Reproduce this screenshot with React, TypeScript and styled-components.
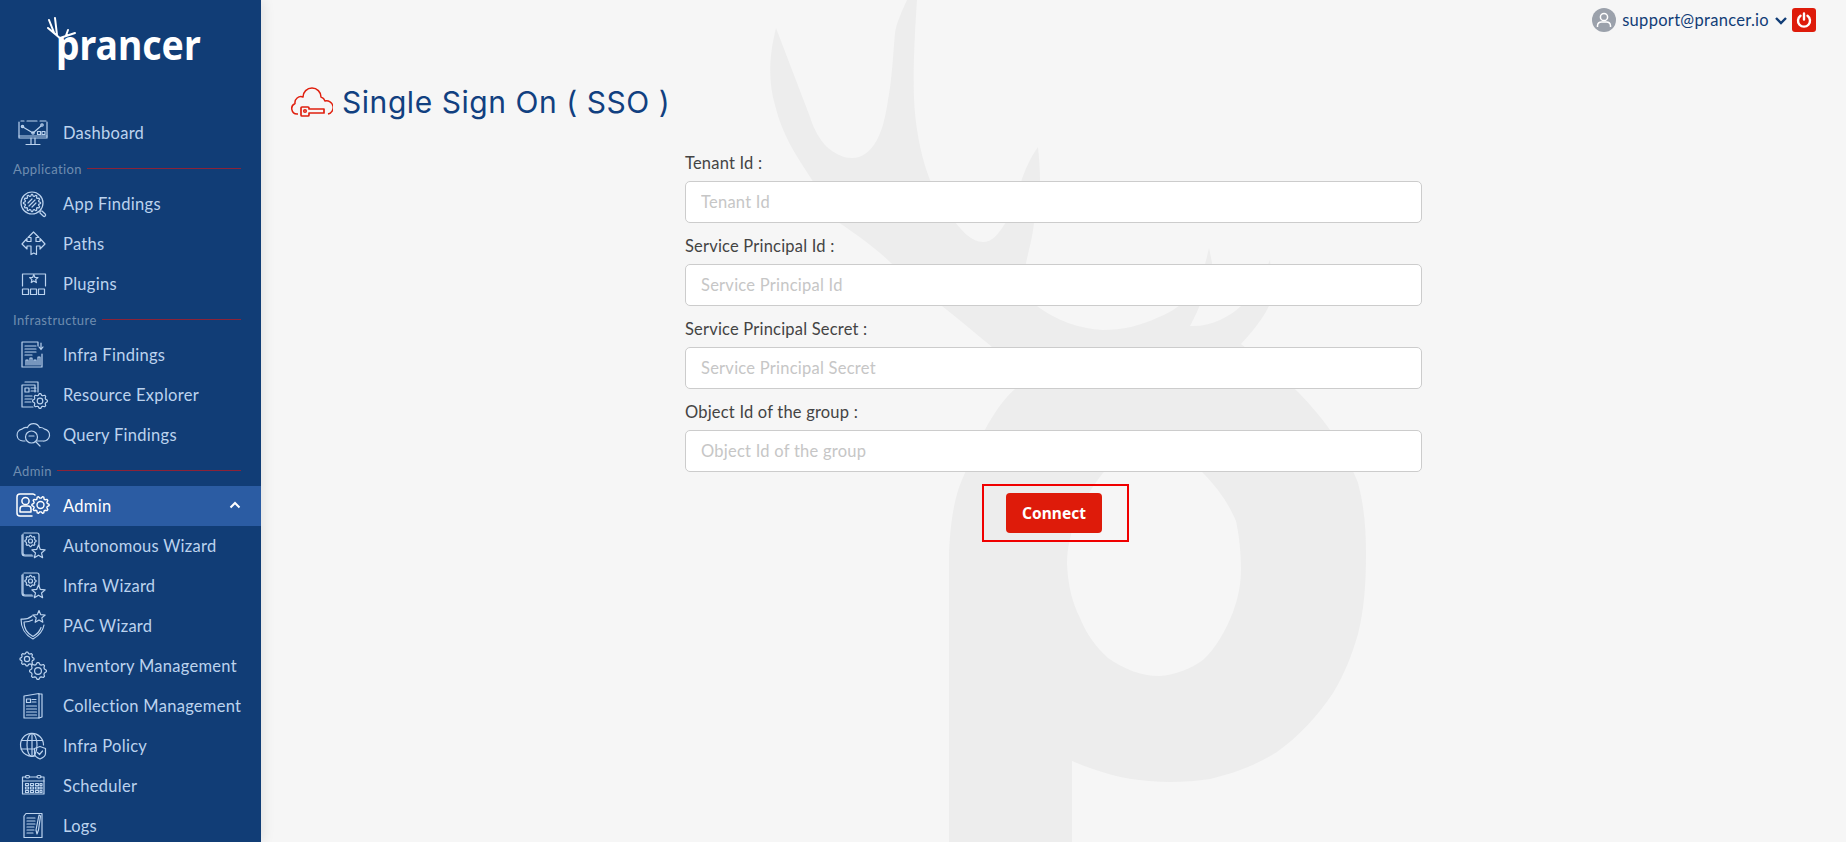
import React from "react";
import styled, { createGlobalStyle } from "styled-components";

const Global = createGlobalStyle`
  html, body { margin: 0; padding: 0; height: 100%; overflow: hidden; background: #f6f6f6; }
  * { box-sizing: border-box; }
  body { font-family: "Lato", "Noto Sans", sans-serif; }
`;

const Page = styled.div`
  display: flex;
  width: 100vw;
  height: 100vh;
  overflow: hidden;
  position: relative;
`;

const Sidebar = styled.aside`
  width: 261px;
  flex: none;
  height: 100%;
  background: #113d76;
  box-shadow: 2px 0 12px rgba(0, 0, 0, 0.09);
  overflow: hidden;
  position: relative;
  z-index: 2;
`;

const LogoArea = styled.div`
  height: 113px;
  position: relative;
`;

const LogoText = styled.div`
  position: absolute;
  left: 56px;
  top: 14px;
  font-family: "Noto Sans", sans-serif;
  font-weight: 700;
  font-size: 42px;
  line-height: 60px;
  color: #fff;
  transform: scaleX(0.89);
  transform-origin: left center;
`;

const Antler = styled.svg`
  position: absolute;
  left: 46px;
  top: 16px;
  fill: none;
  stroke: #fff;
  stroke-linecap: round;
  stroke-width: 2;
`;

const NavRow = styled.div<{ $active?: boolean }>`
  height: 40px;
  display: flex;
  align-items: center;
  padding-left: 15px;
  gap: 12px;
  font-size: 16.5px;
  letter-spacing: 0.28px;
  color: ${(p) => (p.$active ? "#ffffff" : "#bcd3ee")};
  background: ${(p) => (p.$active ? "#2b5ca3" : "transparent")};
  position: relative;
  white-space: nowrap;
`;

const NavText = styled.span`
  margin-top: -1px;
`;

const NavIcon = styled.svg`
  width: 36px;
  height: 36px;
  flex: none;
  fill: none;
  stroke: currentColor;
  stroke-width: 1.2;
  stroke-linejoin: round;
  stroke-linecap: round;
`;

const Chevron = styled.svg`
  position: absolute;
  right: 20px;
  top: 15px;
  fill: none;
  stroke: #fff;
  stroke-width: 2;
`;

const SectionLabel = styled.div`
  height: 31px;
  display: flex;
  align-items: center;
  padding-left: 13px;
  padding-right: 20px;
  gap: 5px;
  font-size: 13px;
  letter-spacing: 0.4px;
  color: #6f8db0;
  &::after {
    content: "";
    flex: 1;
    height: 1px;
    background: #8c2338;
  }
`;

const Main = styled.main`
  flex: 1;
  min-width: 0;
  position: relative;
  display: flex;
  flex-direction: column;
`;

const Watermark = styled.svg`
  position: absolute;
  left: -261px;
  top: 0;
  width: 1846px;
  height: 842px;
  fill: #ededed;
  pointer-events: none;
`;

const TopBar = styled.header`
  height: 40px;
  display: flex;
  justify-content: flex-end;
  align-items: center;
  padding-right: 30px;
  position: relative;
  color: #113d76;
  font-size: 16.5px;
  letter-spacing: 0.3px;
`;

const Avatar = styled.svg`
  margin-right: 6px;
`;

const CaretIcon = styled.svg`
  margin: 0 5px 0 6px;
  fill: none;
  stroke: #113d76;
  stroke-width: 2.4;
`;

const PowerButton = styled.div`
  width: 24px;
  height: 24px;
  border-radius: 3px;
  background: #de1b0a;
  display: flex;
  align-items: center;
  justify-content: center;
`;

const Heading = styled.div`
  margin: 44px 0 0 30px;
  height: 36px;
  display: flex;
  align-items: center;
  gap: 9px;
  position: relative;
`;

const Title = styled.h1`
  margin: 0;
  font-family: "Inter", sans-serif;
  font-weight: 400;
  font-size: 30px;
  letter-spacing: 0.55px;
  color: #114080;
  white-space: nowrap;
`;

const Form = styled.form`
  width: 737px;
  margin: 33px auto 0;
  display: flex;
  flex-direction: column;
  gap: 13px;
  position: relative;
`;

const Field = styled.div`
  display: flex;
  flex-direction: column;
  gap: 8px;
`;

const Label = styled.label`
  height: 20px;
  line-height: 20px;
  font-size: 16.5px;
  letter-spacing: 0.2px;
  color: #444444;
`;

const Input = styled.input`
  height: 42px;
  width: 100%;
  padding: 0 15px 1px;
  border: 1px solid #cccccc;
  border-radius: 5px;
  background: #fff;
  font-family: inherit;
  font-size: 16.5px;
  letter-spacing: 0.25px;
  outline: none;
  &::placeholder {
    color: #c6c6c6;
    opacity: 1;
  }
`;

const Actions = styled.div`
  width: 147px;
  height: 58px;
  margin: -1px 0 0 297px;
  padding-right: 3px;
  border: 2px solid #f00000;
  display: flex;
  align-items: center;
  justify-content: center;
`;

const ConnectButton = styled.button`
  width: 96px;
  height: 40px;
  border: none;
  border-radius: 4px;
  background: #de1b0a;
  color: #fff;
  font-family: "Noto Sans", sans-serif;
  font-weight: 700;
  font-size: 15.5px;
  padding: 0;
`;

const gear = (cx: number, cy: number, r: number, teeth = 8) => {
  const pts: string[] = [];
  const n = teeth * 4;
  for (let i = 0; i < n; i++) {
    const a = ((i - 0.5) / n) * Math.PI * 2;
    const rad = i % 4 < 2 ? r : r * 0.8;
    pts.push(`${(cx + rad * Math.cos(a)).toFixed(2)} ${(cy + rad * Math.sin(a)).toFixed(2)}`);
  }
  return `M${pts.join("L")}Z`;
};

const star = (cx: number, cy: number, r: number) => {
  const pts: string[] = [];
  for (let i = 0; i < 10; i++) {
    const a = (i / 10) * Math.PI * 2 - Math.PI / 2;
    const rad = i % 2 === 0 ? r : r * 0.45;
    pts.push(`${(cx + rad * Math.cos(a)).toFixed(2)} ${(cy + rad * Math.sin(a)).toFixed(2)}`);
  }
  return `M${pts.join("L")}Z`;
};

const Wizard = () => (
  <>
    <path d="M9 5h13a2 2 0 0 1 2 2v11M17 27H10a2 2 0 0 1-2-2V6" />
    <path d="M7 7v18a3 3 0 0 0 3 3h8" />
    <path d={gear(15.5, 13, 5.6)} />
    <circle cx="15.5" cy="13" r="2" />
    <path d={star(23.5, 24, 7)} />
  </>
);

const icons: Record<string, React.ReactNode> = {
  dashboard: (
    <>
      <path d="M4 7v16h28V7M6 6h3M12 6h10M25 6h6" />
      <path d="M7 11.5l6 3.5 5 3 8-7" />
      <circle cx="7.5" cy="11.5" r="1.2" />
      <circle cx="18" cy="18" r="1.2" />
      <circle cx="27" cy="10" r="1.2" />
      <rect x="22.5" y="16.5" width="3" height="3" />
      <rect x="27" y="16.5" width="3" height="3" />
      <path d="M4 21h28M16 23v6M20 23v6M11 29.5h14" />
    </>
  ),
  app: (
    <>
      <circle cx="17" cy="17" r="11" />
      <path d={gear(17, 17, 8.6, 12)} />
      <path d="M14 20l6-6M13 17l4-4M17 21l4-4" />
      <path d="M25 25l2 0 3.2 3a1.4 1.4 0 0 1-2 2L25 27z" />
    </>
  ),
  paths: (
    <path d="M18.5 6l5.5 5.5h-3v4h4V12.5l5 5.5-5 5v-3h-3.5v8.5l-2.7-1.5-2.8 1.5V20h-4v3l-5-5 5-5.5v3h4v-4h-3z" />
  ),
  plugins: (
    <>
      <path d="M7.5 20V8h23v12" />
      <path d={star(18.8, 13, 4.4)} />
      <rect x="7.5" y="23" width="6" height="5.5" />
      <rect x="15.5" y="23" width="6" height="5.5" />
      <rect x="23.5" y="23" width="6" height="5.5" />
    </>
  ),
  infra: (
    <>
      <path d="M23 9V5H7v25h20V17" />
      <path d="M10 9h11M10 12h11M10 15h11M10 18h7" />
      <path d="M11 28v-5h2v5M15 28v-7h2v7M19 28v-5h2v5M23 28v-8h2v8" />
      <path d="M26 6v5M24 10l2 2.5 2-2.5" />
    </>
  ),
  resource: (
    <>
      <path d="M10 5h13v10M7 30V8h13v7M7 30h11" />
      <rect x="10" y="11" width="4" height="4" />
      <path d="M16 11h5M16 14h5M10 19h7M10 22h7M10 25h6" />
      <path d={gear(25, 24, 7.4)} />
      <circle cx="25" cy="24" r="2.8" />
    </>
  ),
  query: (
    <>
      <path d="M10 24H8a6 6 0 0 1-1-11.9 6 6 0 0 1 5.5-1.5 6.5 6.5 0 0 1 12 0 6 6 0 0 1 5 1.5A6 6 0 0 1 28 24h-6" />
      <circle cx="16.5" cy="20" r="6" />
      <path d="M14 19h5M20.500 24.500l4.500 4.500" />
    </>
  ),
  admin: (
    <>
      <path d="M17 28H5a3 3 0 0 1-3-3V9a3 3 0 0 1 3-3h13a3 3 0 0 1 2 1" strokeWidth="1.5" />
      <circle cx="10.5" cy="13" r="3.6" strokeWidth="1.5" />
      <path d="M5 24v-3a3 3 0 0 1 3-3h5a3 3 0 0 1 3 3v3z" strokeWidth="1.5" />
      <path d={gear(25.5, 17, 8.6, 10)} strokeWidth="1.4" />
      <circle cx="25.5" cy="17" r="3.5" strokeWidth="1.4" />
    </>
  ),
  wizard: <Wizard />,
  pac: (
    <>
      <path d="M17 8c-3 2.500-7 3.500-11 3 0 9 3 15 12 20 6-3.500 10-8 11-14" />
      <path d="M17.500 12c-2.500 1.500-5.500 2-8.500 2 0 7 3 11.500 9 14.500 4-2.500 7-5 8-9" />
      <path d={star(24, 9, 6.5)} />
    </>
  ),
  inventory: (
    <>
      <path d={gear(12, 11, 7)} />
      <circle cx="12" cy="11" r="2.6" />
      <path d={gear(23, 23, 8.4)} />
      <circle cx="23" cy="23" r="3.4" />
    </>
  ),
  collection: (
    <>
      <path d="M24 5.500L9 8v22h15z" />
      <path d="M24 6h3v23l-3 1" />
      <rect x="11.5" y="11" width="4" height="3.5" />
      <path d="M17 11.500h4M17 14h4M11.500 18h10M11.500 21h10M11.500 24h10M11.500 27h10" />
    </>
  ),
  policy: (
    <>
      <path d="M20 28A11.500 11.500 0 1 1 28.500 17" />
      <ellipse cx="17" cy="17" rx="5" ry="11.5" />
      <path d="M17 5.500v23M6.500 12.500h21M6 21h13" />
      <path d="M25 18.500l5.500 2v5c0 3-3 4.500-5.500 5.500-2.500-1-5.500-2.500-5.500-5.500v-5z" />
      <path d="M22.500 24.500l2 2 3-3.500" />
    </>
  ),
  scheduler: (
    <>
      <path d="M11 9H7.500v17h21.500V9h-3.500M15 9h7" />
      <path d="M7.500 13h21.500" />
      <rect x="10.5" y="7.5" width="4" height="2.5" rx="1.2" />
      <rect x="22" y="7.5" width="4" height="2.5" rx="1.2" />
      <path d="M10.500 15.500h3v2h-3zM15.500 15.500h3v2h-3zM20.500 15.500h3v2h-3zM25 15.500h2v2h-2zM10.500 19h3v2h-3zM15.500 19h3v2h-3zM20.500 19h3v2h-3zM25 19h2v2h-2zM10.500 22.500h3v2h-3zM15.500 22.500h3v2h-3zM20.500 22.500h3v2h-3zM25 22.500h2v2h-2z" />
    </>
  ),
  logs: (
    <>
      <path d="M11 5.500h16v24H9V8z" />
      <path d="M12 10h8M12 13h8M12 16h8M12 19h7M12 22h7M12 25h6" />
      <path d="M24 7l1.500 1-2 14-1.500 4-1-4z" />
    </>
  ),
};

const Nav = ({ icon, label, active }: { icon: string; label: string; active?: boolean }) => (
  <NavRow $active={active}>
    <NavIcon viewBox="0 0 36 36">{icons[icon]}</NavIcon>
    <NavText>{label}</NavText>
    {active && (
      <Chevron width="12" height="8" viewBox="0 0 12 8">
        <path d="M1.500 6.500L6 2l4.500 4.500" />
      </Chevron>
    )}
  </NavRow>
);

const fields = ["Tenant Id", "Service Principal Id", "Service Principal Secret", "Object Id of the group"];

export default function App() {
  return (
    <Page>
      <Global />
      <Sidebar>
        <LogoArea>
          <LogoText>prancer</LogoText>
          <Antler width="36" height="36" viewBox="0 0 36 36">
            <path d="M2 12L15 23M8 16.500L3 4M11 19L9 2M14 22L29 17M20 19.500L22 14" />
          </Antler>
        </LogoArea>
        <Nav icon="dashboard" label="Dashboard" />
        <SectionLabel>Application</SectionLabel>
        <Nav icon="app" label="App Findings" />
        <Nav icon="paths" label="Paths" />
        <Nav icon="plugins" label="Plugins" />
        <SectionLabel>Infrastructure</SectionLabel>
        <Nav icon="infra" label="Infra Findings" />
        <Nav icon="resource" label="Resource Explorer" />
        <Nav icon="query" label="Query Findings" />
        <SectionLabel>Admin</SectionLabel>
        <Nav icon="admin" label="Admin" active />
        <Nav icon="wizard" label="Autonomous Wizard" />
        <Nav icon="wizard" label="Infra Wizard" />
        <Nav icon="pac" label="PAC Wizard" />
        <Nav icon="inventory" label="Inventory Management" />
        <Nav icon="collection" label="Collection Management" />
        <Nav icon="policy" label="Infra Policy" />
        <Nav icon="scheduler" label="Scheduler" />
        <Nav icon="logs" label="Logs" />
      </Sidebar>
      <Main>
        <Watermark viewBox="0 0 1846 842">
          <path
            fillRule="evenodd"
            d="M776 28C768 60 769 85 775 105C782 135 796 155 812 180C822 195 832 215 838 222C860 237 878 250 891 263C910 280 925 293 942 306C960 320 976 334 991 346C1000 358 1008 375 1016 388C996 405 978 440 965 473C957 490 951 510 949 553L949 842L1072 842L1072 761C1098 772 1122 779 1149 781C1170 783 1190 782 1210 779C1235 773 1256 765 1277 752C1298 737 1318 716 1333 693C1344 675 1352 655 1358 634C1364 610 1366 585 1366 553C1366 528 1364 505 1358 483C1350 462 1340 445 1330 430C1318 413 1306 400 1294 388C1278 372 1258 358 1241 344C1252 332 1262 320 1269 306C1272 290 1272 275 1270 260C1262 280 1252 295 1241 306C1228 318 1210 327 1190 326C1200 308 1208 285 1212 263L1209 248C1205 265 1202 278 1195 290C1185 303 1172 312 1159 317C1140 326 1122 330 1103 330C1080 329 1055 320 1037 306C1032 293 1028 278 1026 263C1030 245 1033 235 1034 222C1038 205 1040 195 1040 180C1040 168 1039 158 1038 147C1030 158 1025 170 1021 182C1016 195 1012 210 1006 222C998 235 992 242 983 242C972 242 963 232 955 222C945 207 936 195 930 180C922 160 917 135 915 113C913 90 913 60 917 0L907 0C900 15 896 25 895 33C893 55 892 80 888 100C885 120 882 130 877 140C870 152 862 158 852 158C842 158 834 153 827 147C820 140 814 130 810 117Z M1150 440C1132 445 1116 458 1103 473C1092 487 1084 500 1078 516C1071 530 1067 548 1067 564C1068 585 1072 602 1080 618C1087 635 1096 647 1108 658C1124 669 1141 676 1159 676C1176 675 1190 669 1203 660C1216 648 1226 630 1233 612C1238 598 1241 585 1241 569C1241 552 1239 535 1236 521C1228 502 1216 486 1202 472C1188 456 1170 444 1150 440Z"
          />
        </Watermark>
        <TopBar>
          <Avatar width="24" height="24" viewBox="0 0 24 24">
            <circle cx="12" cy="12" r="12" fill="#9ba1ab" />
            <circle cx="12" cy="9" r="3.6" fill="none" stroke="#fff" strokeWidth="1.5" />
            <path d="M5.500 19v-1.500a4 4 0 0 1 4-3.500h5a4 4 0 0 1 4 3.500V19" fill="none" stroke="#fff" strokeWidth="1.5" />
          </Avatar>
          <span>support@prancer.io</span>
          <CaretIcon width="12" height="9" viewBox="0 0 12 9">
            <path d="M1 2l5 5 5-5" />
          </CaretIcon>
          <PowerButton>
            <svg width="16" height="16" viewBox="0 0 16 16" fill="none" stroke="#fff" strokeWidth="2.4" strokeLinecap="round">
              <path d="M4.500 3.800a6 6 0 1 0 7 0M8 1.500v6" />
            </svg>
          </PowerButton>
        </TopBar>
        <Heading>
          <svg width="42" height="30" viewBox="0 0 42 30" fill="none" stroke="#e0200f" strokeWidth="1.5" strokeLinejoin="round">
            <path d="M7 27H6A5.500 5.500 0 0 1 4 16.500 6 6 0 0 1 12 10 9 9 0 0 1 30 10 6 6 0 0 1 34 14 6.500 6.500 0 0 1 37 27" />
            <path d="M10 27v-6a1 1 0 0 1 1-1h6a1 1 0 0 1 1 1v1h15v4H18v2a1 1 0 0 1-1 1h-6a1 1 0 0 1-1-1z" strokeWidth="1.7" />
            <circle cx="14" cy="24" r="1.3" />
          </svg>
          <Title>Single Sign On ( SSO )</Title>
        </Heading>
        <Form>
          {fields.map((f) => (
            <Field key={f}>
              <Label>{f} :</Label>
              <Input placeholder={f} />
            </Field>
          ))}
          <Actions>
            <ConnectButton type="button">Connect</ConnectButton>
          </Actions>
        </Form>
      </Main>
    </Page>
  );
}
